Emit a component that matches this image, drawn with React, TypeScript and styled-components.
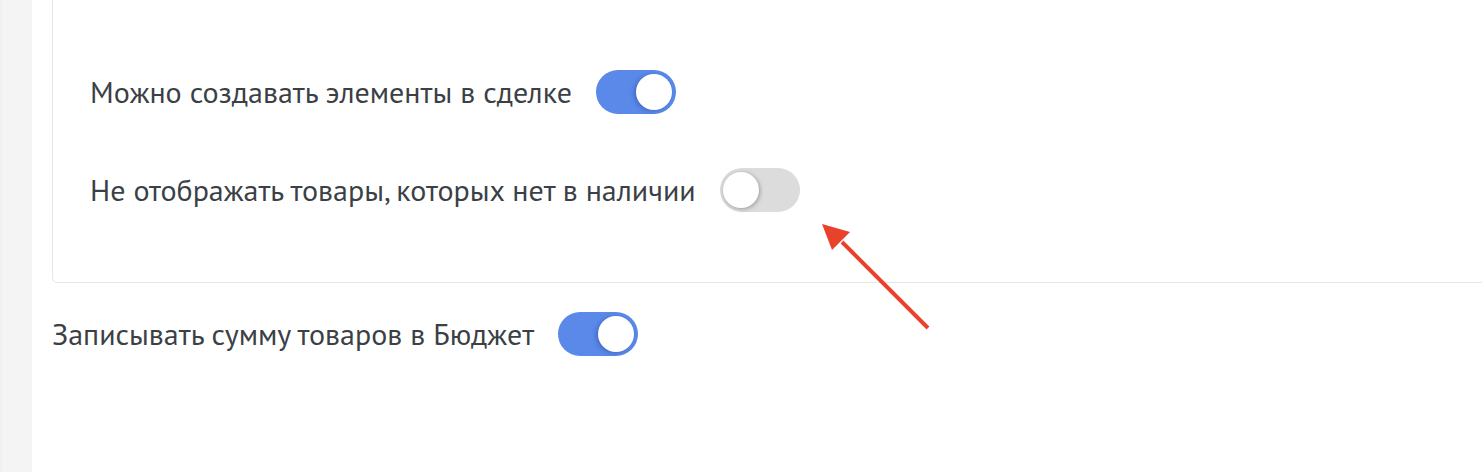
import styled, { createGlobalStyle } from 'styled-components'

const GlobalStyle = createGlobalStyle`
    html, body {
        margin: 0;
        padding: 0;
        background: #ffffff;
    }
    body {
        font-family: 'PT Sans', 'Lato', 'Noto Sans', sans-serif;
        color: #3b3f46;
    }
`

const Page = styled.div`
    display: flex;
    width: 1482px;
    height: 472px;
    overflow: hidden;
`
const Sidebar = styled.div`
    width: 32px;
    flex-shrink: 0;
    background: #f4f4f4;
    border-left: 2px solid #f0f0f0;
    box-sizing: border-box;
`
const Content = styled.div`
    position: relative;
    flex-grow: 1;
    padding-left: 20px;
`
const Card = styled.div`
    margin-top: -10px;
    margin-right: -20px;
    height: 293px;
    box-sizing: border-box;
    border: 1px solid #e6e6e6;
    border-radius: 5px;
    padding: 79px 0 0 37px;
    display: flex;
    flex-direction: column;
    gap: 54px;
`
const Row = styled.label<{ outer?: boolean }>`
    display: flex;
    align-items: center;
    gap: 24px;
    margin-top: ${props => props.outer ? '29px' : '0'};
`
const Label = styled.span`
    font-size: 30px;
    line-height: 44px;
`
const Toggle = styled.span<{ on: boolean }>`
    position: relative;
    width: 80px;
    height: 44px;
    border-radius: 22px;
    flex-shrink: 0;
    background: ${props => props.on ? '#5a89ea' : '#dcdcdc'};

    &::after {
        content: '';
        position: absolute;
        top: 4px;
        left: ${props => props.on ? '40px' : '3px'};
        width: 36px;
        height: 36px;
        border-radius: 50%;
        background: #ffffff;
        box-shadow: ${props => props.on ? '-2px 1px 4px rgba(30, 50, 120, 0.35)' : '1px 1px 4px rgba(0, 0, 0, 0.3)'};
    }
`
const Arrow = styled.svg`
    position: absolute;
    left: 770px;
    top: 218px;
`

export default function App() {
    return (
        <Page>
            <GlobalStyle />
            <Sidebar />
            <Content>
                <Card>
                    <Row>
                        <Label>Можно создавать элементы в сделке</Label>
                        <Toggle on={true} />
                    </Row>
                    <Row>
                        <Label>Не отображать товары, которых нет в наличии</Label>
                        <Toggle on={false} />
                    </Row>
                </Card>
                <Row outer>
                    <Label>Записывать сумму товаров в Бюджет</Label>
                    <Toggle on={true} />
                </Row>
                <Arrow width="140" height="120" viewBox="0 0 140 120">
                    <line x1="126" y1="110" x2="40" y2="24" stroke="#e8412c" strokeWidth="4" />
                    <polygon points="20,6 48,14 30,32" fill="#e8412c" />
                </Arrow>
            </Content>
        </Page>
    )
}
